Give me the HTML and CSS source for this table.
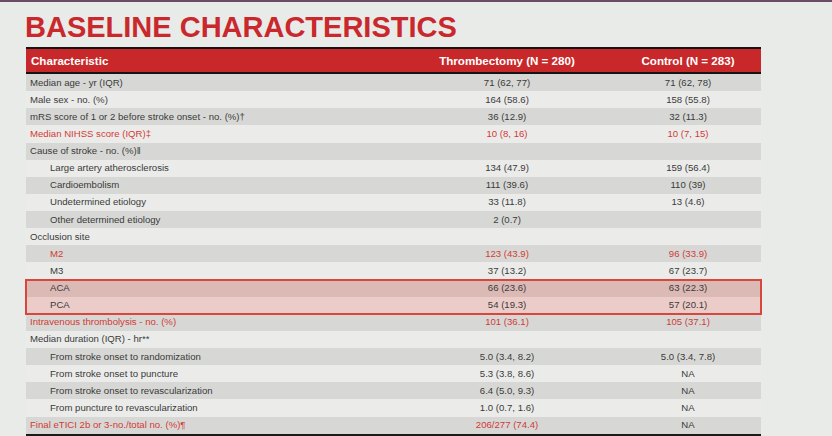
FILE: index.html
```html
<!DOCTYPE html>
<html>
<head>
<meta charset="utf-8">
<link rel="stylesheet" href="styles.css">
</head>
<body>
<div class="topline"></div>
<h1 class="title">BASELINE CHARACTERISTICS</h1>
<div class="table">
  <div class="row head">
    <div class="c1">Characteristic</div>
    <div class="c2">Thrombectomy (N = 280)</div>
    <div class="c3">Control (N = 283)</div>
  </div>
  <div class="row dark"><div class="c1">Median age - yr (IQR)</div><div class="c2">71 (62, 77)</div><div class="c3">71 (62, 78)</div></div>
  <div class="row light"><div class="c1">Male sex - no. (%)</div><div class="c2">164 (58.6)</div><div class="c3">158 (55.8)</div></div>
  <div class="row dark"><div class="c1">mRS score of 1 or 2 before stroke onset - no. (%)†</div><div class="c2">36 (12.9)</div><div class="c3">32 (11.3)</div></div>
  <div class="row light red"><div class="c1">Median NIHSS score (IQR)‡</div><div class="c2">10 (8, 16)</div><div class="c3">10 (7, 15)</div></div>
  <div class="row dark"><div class="c1">Cause of stroke - no. (%)‖</div><div class="c2"></div><div class="c3"></div></div>
  <div class="row light"><div class="c1 ind">Large artery atherosclerosis</div><div class="c2">134 (47.9)</div><div class="c3">159 (56.4)</div></div>
  <div class="row dark"><div class="c1 ind">Cardioembolism</div><div class="c2">111 (39.6)</div><div class="c3">110 (39)</div></div>
  <div class="row light"><div class="c1 ind">Undetermined etiology</div><div class="c2">33 (11.8)</div><div class="c3">13 (4.6)</div></div>
  <div class="row dark"><div class="c1 ind">Other determined etiology</div><div class="c2">2 (0.7)</div><div class="c3"></div></div>
  <div class="row light"><div class="c1">Occlusion site</div><div class="c2"></div><div class="c3"></div></div>
  <div class="row dark red"><div class="c1 ind">M2</div><div class="c2">123 (43.9)</div><div class="c3">96 (33.9)</div></div>
  <div class="row light"><div class="c1 ind">M3</div><div class="c2">37 (13.2)</div><div class="c3">67 (23.7)</div></div>
  <div class="boxed">
    <div class="row pinkdark"><div class="c1 ind">ACA</div><div class="c2">66 (23.6)</div><div class="c3">63 (22.3)</div></div>
    <div class="row pinklight"><div class="c1 ind">PCA</div><div class="c2">54 (19.3)</div><div class="c3">57 (20.1)</div></div>
  </div>
  <div class="row dark red"><div class="c1">Intravenous thrombolysis - no. (%)</div><div class="c2">101 (36.1)</div><div class="c3">105 (37.1)</div></div>
  <div class="row light"><div class="c1">Median duration (IQR) - hr**</div><div class="c2"></div><div class="c3"></div></div>
  <div class="row dark"><div class="c1 ind">From stroke onset to randomization</div><div class="c2">5.0 (3.4, 8.2)</div><div class="c3">5.0 (3.4, 7.8)</div></div>
  <div class="row light"><div class="c1 ind">From stroke onset to puncture</div><div class="c2">5.3 (3.8, 8.6)</div><div class="c3">NA</div></div>
  <div class="row dark"><div class="c1 ind">From stroke onset to revascularization</div><div class="c2">6.4 (5.0, 9.3)</div><div class="c3">NA</div></div>
  <div class="row light"><div class="c1 ind">From puncture to revascularization</div><div class="c2">1.0 (0.7, 1.6)</div><div class="c3">NA</div></div>
  <div class="row dark red last"><div class="c1">Final eTICI 2b or 3-no./total no. (%)¶</div><div class="c2">206/277 (74.4)</div><div class="c3 black">NA</div></div>
</div>
</body>
</html>
```
FILE: styles.css
```css
html, body {
  margin: 0;
  padding: 0;
}
body {
  width: 832px;
  height: 436px;
  overflow: hidden;
  background: #e9ebe8;
  font-family: "Liberation Sans", Arial, sans-serif;
  color: #3a3a3a;
}
.topline {
  height: 2px;
  background: #6c4c64;
}
.title {
  margin: 11px 0 0 25px;
  font-size: 29px;
  line-height: 29px;
  font-weight: bold;
  color: #c9282c;
  letter-spacing: 0;
}
.table {
  margin: 5px 0 0 26px;
  width: 735px;
  border-bottom: 2px solid #1a1a1a;
}
.row {
  display: grid;
  grid-template-columns: 373px 216px 146px;
  height: 17.14px;
  align-items: center;
  font-size: 9.6px;
  line-height: 12px;
}
.row > div {
  white-space: nowrap;
}
.c1 {
  padding-left: 4px;
}
.c1.ind {
  padding-left: 24px;
}
.c2, .c3 {
  text-align: center;
}
.head {
  height: 23px;
  background: #c8282a;
  border-top: 2px solid #141414;
  border-bottom: 2px solid #141414;
  color: #fff;
  font-weight: bold;
  font-size: 11.6px;
}
.head .c1 {
  padding-left: 5px;
}
.dark {
  background: #d7d8d5;
}
.light {
  background: #ebecea;
}
.red {
  color: #d23a36;
}
.red .black {
  color: #3a3a3a;
}
.pinkdark {
  background: #dbbab6;
}
.pinklight {
  background: #ecccc8;
}
.boxed {
  outline: 2px solid #d8463c;
  outline-offset: -1px;
}
```
